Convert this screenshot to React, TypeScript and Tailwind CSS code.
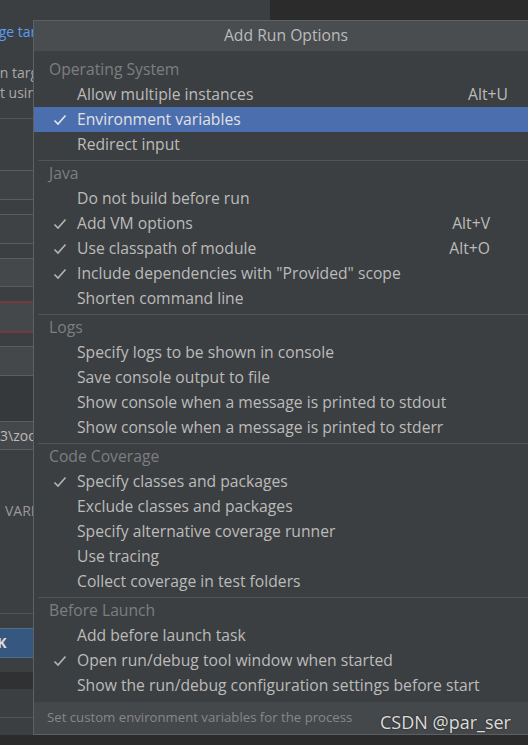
import { Fragment } from 'react'

type Item = { label: string; checked?: boolean; selected?: boolean; keys?: string; keyPad?: string }
type Section = { title: string; items: Item[] }

const sections: Section[] = [
    {
        title: 'Operating System',
        items: [
            { label: 'Allow multiple instances', keys: 'Alt+U', keyPad: 'pr-[24px]' },
            { label: 'Environment variables', checked: true, selected: true },
            { label: 'Redirect input' },
        ],
    },
    {
        title: 'Java',
        items: [
            { label: 'Do not build before run' },
            { label: 'Add VM options', checked: true, keys: 'Alt+V', keyPad: 'pr-[42px]' },
            { label: 'Use classpath of module', checked: true, keys: 'Alt+O', keyPad: 'pr-[42px]' },
            { label: 'Include dependencies with "Provided" scope', checked: true },
            { label: 'Shorten command line' },
        ],
    },
    {
        title: 'Logs',
        items: [
            { label: 'Specify logs to be shown in console' },
            { label: 'Save console output to file' },
            { label: 'Show console when a message is printed to stdout' },
            { label: 'Show console when a message is printed to stderr' },
        ],
    },
    {
        title: 'Code Coverage',
        items: [
            { label: 'Specify classes and packages', checked: true },
            { label: 'Exclude classes and packages' },
            { label: 'Specify alternative coverage runner' },
            { label: 'Use tracing' },
            { label: 'Collect coverage in test folders' },
        ],
    },
    {
        title: 'Before Launch',
        items: [
            { label: 'Add before launch task' },
            { label: 'Open run/debug tool window when started', checked: true },
            { label: 'Show the run/debug configuration settings before start' },
        ],
    },
]

function Check({ light }: { light?: boolean }) {
    return (
        <svg width="14" height="14" viewBox="0 0 14 14" fill="none" stroke={light ? '#e6e6e6' : '#b4b4b4'} strokeWidth="1.6">
            <path d="M1.5 7.5 L5 11 L12.5 2.5" />
        </svg>
    )
}

// the run configuration dialog behind the popup; only its left edge shows
function BackDialog() {
    return (
        <div className="w-[270px] h-[735px] bg-[#3c3f41] flex flex-col overflow-hidden text-[14px] leading-[18px]">
            <div className="mt-[23px] -ml-[38px] whitespace-nowrap text-[#589df6]">Manage targets...</div>
            <div className="mt-[23px] -ml-[38px] whitespace-nowrap text-[#a9a9a9]">Run on target</div>
            <div className="mt-[2px] -ml-[19px] whitespace-nowrap text-[#a9a9a9]">Not using</div>
            <div className="mt-[16px] h-px bg-[#515355]" />
            <div className="mt-[51px] h-[30px] border-y border-[#5a5d5f] bg-[#3f4244]" />
            <div className="mt-[14px] h-[30px] border-y border-[#5a5d5f] bg-[#3f4244]" />
            <div className="mt-[14px] h-[29px] border-y border-[#5a5d5f] bg-[#45484a]" />
            <div className="mt-[14px] h-[32px] border-y-2 border-[#743a3a] bg-[#45484a]" />
            <div className="mt-[13px] h-[30px] border-y border-[#5a5d5f] bg-[#45484a]" />
            <div className="h-[45px] bg-[#36393b]" />
            <div className="h-[29px] border-y border-[#5a5d5f] bg-[#45484a] -ml-[9px] whitespace-nowrap text-[#bbbbbb] leading-[27px]">B3\zookeeper</div>
            <div className="mt-[52px] ml-[5px] whitespace-nowrap text-[#9a9a9a]">VARIABLES</div>
            <div className="mt-[93px] h-px bg-[#515355]" />
            <div className="mt-[14px] h-[30px] border border-[#4c708c] bg-[#365880] -ml-[15px] whitespace-nowrap font-bold text-[#dddddd] leading-[28px]">OK</div>
            <div className="mt-[14px] h-[17px] bg-[#2f3133]" />
            <div className="mt-[28px] h-px bg-[#515355]" />
        </div>
    )
}

export default function App() {
    return (
        <div className="relative w-[528px] h-[745px] overflow-hidden bg-[#2b2b2b]" style={{ fontFamily: '"Open Sans", "Noto Sans", sans-serif' }}>
            <BackDialog />
            <div className="absolute left-[33px] top-[20px] w-[500px] h-[715px] border border-[#5e6163] bg-[#3c3f41] flex flex-col">
                <div className="h-[30px] shrink-0 bg-[#4a4d50] flex items-center justify-center text-[15.7px] text-[#bbbbbb] pl-[6px]">
                    Add Run Options
                </div>
                <div className="flex-1 flex flex-col pt-[6px]">
                    {sections.map((s, i) => (
                        <Fragment key={s.title}>
                            {i > 0 && <div className="ml-[4px] h-px bg-[#515456]" />}
                            <div className={`flex flex-col ${i === sections.length - 1 ? 'pb-[4px]' : 'pb-[3px]'}`}>
                                <div className="h-[25px] flex items-center pl-[15px] text-[15.7px] text-[#7c7e80]">{s.title}</div>
                                {s.items.map(it => (
                                    <div
                                        key={it.label}
                                        className={`h-[25px] flex items-center text-[15.7px] ${it.selected ? 'bg-[#4b6eaf] text-[#e1e1e1]' : 'text-[#bbbbbb]'}`}
                                    >
                                        <div className="w-[43px] flex justify-end pr-[10px]">
                                            {it.checked && <Check light={it.selected} />}
                                        </div>
                                        <span className="flex-1 whitespace-nowrap">{it.label}</span>
                                        {it.keys && <span className={`${it.keyPad} text-[#bbbbbb]`}>{it.keys}</span>}
                                    </div>
                                ))}
                            </div>
                        </Fragment>
                    ))}
                </div>
                <div className="h-[32px] shrink-0 bg-[#45484a] flex items-center pl-[13px] text-[13.2px] text-[#858789]">
                    Set custom environment variables for the process
                </div>
            </div>
            <div className="absolute left-[380px] top-[709px] text-[18px] text-[#dcdcdc] whitespace-nowrap [text-shadow:0_0_2px_#222]">
                CSDN @par_ser
            </div>
        </div>
    )
}
